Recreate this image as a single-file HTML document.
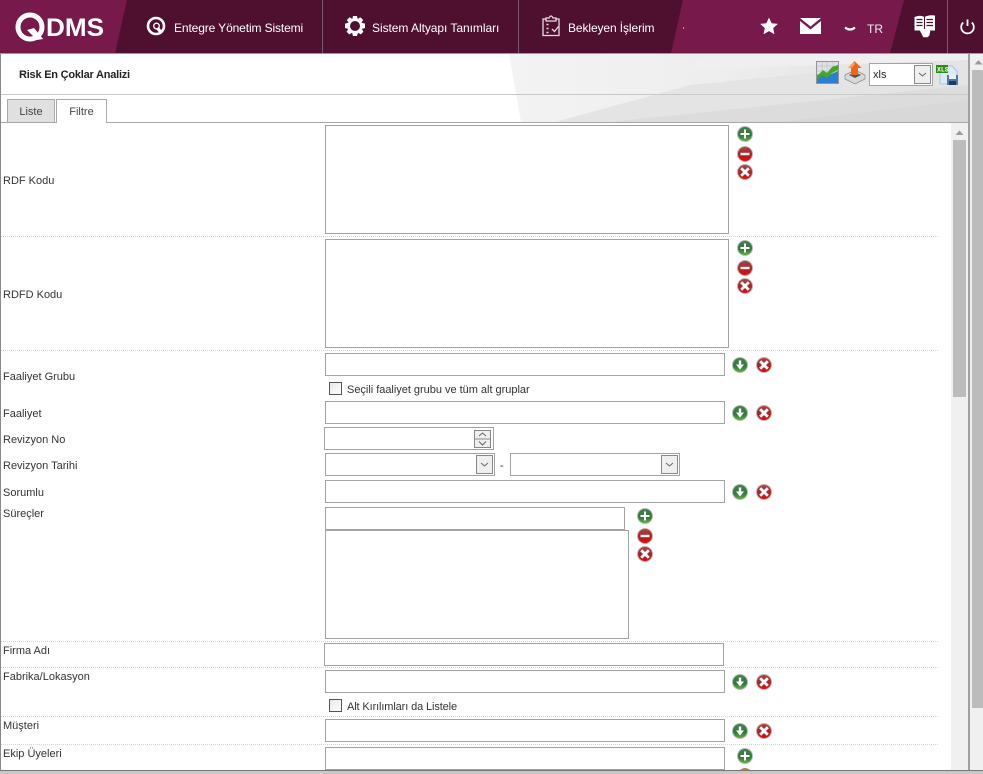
<!DOCTYPE html>
<html lang="tr"><head><meta charset="utf-8"><title>Risk En Çoklar Analizi</title>
<style>
html,body{margin:0;padding:0;width:983px;height:774px;overflow:hidden;background:#fff;font-family:"Liberation Sans",sans-serif}
#p{position:relative;width:983px;height:774px;overflow:hidden}
.a,.l,.n,input,.b,.sep{position:absolute}
.l{left:3px;font-size:11px;line-height:14px;color:#333;white-space:nowrap}
.n{top:18px;color:#fff;font-size:12px;line-height:18px;white-space:nowrap}
input,.b{box-sizing:border-box;border:1px solid #a3a3a3;background:#fff;margin:0;padding:0;border-radius:0;outline:0}
.sep{left:0;width:938px;height:0;border-top:1px dotted #d4d4d4}
.cb{position:absolute;box-sizing:border-box;width:13px;height:13px;border:1px solid #555;background:linear-gradient(135deg,#e8e8e8,#fff)}
svg{position:absolute;left:0;top:0}
</style></head><body><div id="p">

<svg width="983" height="123" viewBox="0 0 983 123" style="z-index:0">
<defs><linearGradient id="bg" x1="0" x2="1"><stop offset="0" stop-color="#f3f3f3"/><stop offset=".45" stop-color="#eeeeee"/><stop offset="1" stop-color="#dedede"/></linearGradient></defs>
<rect y="54" width="970" height="69" fill="#fff"/>
<polygon points="509,54 969,54 969,122 521,122" fill="url(#bg)"/>
<polygon points="555,122 690,85 969,58 969,122" fill="#e4e4e4"/>
<polygon points="610,122 969,85 969,122" fill="#dcdcdc"/>
<polygon points="780,122 969,100 969,122" fill="#d8d8d8"/>
<polygon points="712,54 969,54 969,60 680,70" fill="#efefef"/>
</svg>

<div class="a" style="left:0;top:0;width:983px;height:53px;background:#771a4b"></div>
<svg width="983" height="54" style="z-index:1">
<polygon points="127,0 683,0 671,53 115,53" fill="#4f102f"/>
<polygon points="904,0 983,0 983,53 890,53" fill="#4f102f"/>
<rect x="322" width="1" height="53" fill="#7d5a6e"/>
<rect x="518" width="1" height="53" fill="#7d5a6e"/>
<rect x="947" width="1" height="53" fill="#7d5a6e"/>
<rect y="53" width="983" height="1" fill="#9a9a9a"/>
<!-- logo -->
<circle cx="30" cy="27" r="12" fill="none" stroke="#fff" stroke-width="5"/>
<path d="M27 30 L37 40 L43 39 L34 28 Z" fill="#fff"/>
<text x="46" y="36" font-family="Liberation Sans" font-weight="700" font-size="25" fill="#fff" textLength="58" lengthAdjust="spacingAndGlyphs">DMS</text>
<!-- Q nav -->
<circle cx="156" cy="26" r="8" fill="none" stroke="#fff" stroke-width="2.6"/>
<circle cx="156.500" cy="26" r="2.800" fill="none" stroke="#fff" stroke-width="1.300"/>
<path d="M156 29 L160 33.500 L163 32 L159 27.500 Z" fill="#fff"/>
<!-- gear -->
<g transform="translate(355 26)" fill="#fff">
<path d="M-2-10H2L2.700-7 5.300-8.800 8.200-6 6.400-3.300 10-2.400V2L6.800 2.900 8.400 5.800 5.800 8.400 3 6.800 2 10H-2L-2.900 6.800-5.800 8.400-8.400 5.800-6.800 2.900-10 2V-2.400L-6.400-3.300-8.200-6-5.300-8.800-2.700-7Z"/>
<circle r="5" fill="#4f102f"/></g>
<!-- clipboard -->
<g fill="none" stroke="#e8dce2" stroke-width="1.300">
<path d="M546 19H543V35.500H559V19H556"/>
<path d="M546 21V18H549Q551 14 553 18H556V21Z"/>
<path d="M546.500 24.500h2M546.500 28.500h2M546.500 32.500h2" stroke-width="1.500"/>
<path d="M552 29l2.500 2.500 4-5"/>
</g>
<rect x="683" y="27" width="1" height="2" fill="#d98a5a"/>
<!-- star -->
<path d="M769 17.500l2.600 5.700 6.200.7-4.600 4.200 1.300 6.100-5.500-3.100-5.500 3.100 1.300-6.100-4.600-4.200 6.200-.7Z" fill="#fff"/>
<!-- mail -->
<path d="M800 18H821L810.500 26.500Z" fill="#fff"/>
<path d="M800 21L810.500 29.500 821 21V34H800Z" fill="#fff"/>
<!-- chevron -->
<path d="M845 27.500Q850 31.500 855 27.500" fill="none" stroke="#fff" stroke-width="2.200"/>
<!-- book -->
<g>
<path d="M914.500 17Q920 14.500 924.500 17Q929 14.500 935 15.500V30.500H926L914.500 30.500Z" fill="#fff"/>
<path d="M924.500 17V30" stroke="#4f102f"/>
<path d="M916.500 19.500h6M916.500 22.500h6M916.500 25.500h6M926.500 19.500h6.500M926.500 22.500h6.500M926.500 25.500h6.500" stroke="#4f102f" stroke-width="1.200"/>
<path d="M918 27l1.800-1.200 3 3.500 6-1 1.500 3-1 4.500-2 1.500h-4l-1.800-3.500Z" fill="#fff"/>
</g>
<!-- power -->
<path d="M963.200 22.500A6.300 6.300 0 1 0 971.800 22.500" fill="none" stroke="#fff" stroke-width="1.800"/>
<path d="M967.500 19.500V26" stroke="#fff" stroke-width="1.800"/>
</svg>
<div class="n" style="left:174px;top:19px;z-index:2;letter-spacing:-.12px">Entegre Yönetim Sistemi</div>
<div class="n" style="left:372px;top:19px;z-index:2;letter-spacing:-.05px">Sistem Altyapı Tanımları</div>
<div class="n" style="left:568px;top:19px;z-index:2;letter-spacing:-.1px">Bekleyen İşlerim</div>
<div class="n" style="left:867px;top:20px;z-index:2;color:#eee;font-size:12px">TR</div>

<div class="a" style="left:0;top:54px;width:1px;height:716px;background:#8a8a8a;z-index:3"></div>
<div class="a" style="left:19px;top:68px;font-size:11px;font-weight:700;line-height:14px;letter-spacing:-.22px;color:#222;z-index:2;white-space:nowrap">Risk En Çoklar Analizi</div>
<div class="a" style="left:1px;top:94px;width:968px;height:1px;background:#c8c8c8;z-index:1"></div>
<div class="a" style="left:1px;top:122px;width:968px;height:1px;background:#a8a8a8;z-index:1"></div>

<div class="a" style="box-sizing:border-box;left:7px;top:99px;width:48px;height:23px;background:#e0e0e0;border:1px solid #aaa;border-bottom:0;font-size:11px;line-height:24px;text-align:center;color:#444;z-index:2">Liste</div>
<div class="a" style="box-sizing:border-box;left:56px;top:99px;width:51px;height:24px;background:#fff;border:1px solid #aaa;border-bottom:0;font-size:11px;line-height:24px;text-align:center;color:#444;z-index:2">Filtre</div>

<div class="a" style="left:1px;top:123px;width:951px;height:647px;background:#fff"></div>

<!-- inner scrollbar -->
<div class="a" style="left:951px;top:123px;width:17px;height:647px;background:#f0f0f0"></div>
<div class="a" style="left:953px;top:140px;width:13px;height:257px;background:#bcbcbc"></div>
<!-- outer scrollbar -->
<div class="a" style="left:968px;top:54px;width:2px;height:716px;background:#a0a0a0;z-index:2"></div>
<div class="a" style="left:970px;top:54px;width:13px;height:716px;background:#f0f0f0"></div>
<div class="a" style="left:972px;top:70px;width:11px;height:638px;background:#bcbcbc"></div>

<div class="sep" style="top:236px"></div>
<div class="sep" style="top:350px"></div>
<div class="sep" style="top:641px"></div>
<div class="sep" style="top:667px"></div>
<div class="sep" style="top:716px"></div>
<div class="sep" style="top:744px"></div>

<div class="l" style="top:174px">RDF Kodu</div>
<div class="l" style="top:288px">RDFD Kodu</div>
<div class="l" style="top:370px">Faaliyet Grubu</div>
<div class="l" style="top:407px">Faaliyet</div>
<div class="l" style="top:433px">Revizyon No</div>
<div class="l" style="top:459px">Revizyon Tarihi</div>
<div class="l" style="top:486px">Sorumlu</div>
<div class="l" style="top:507px">Süreçler</div>
<div class="l" style="top:644px">Firma Adı</div>
<div class="l" style="top:670px">Fabrika/Lokasyon</div>
<div class="l" style="top:719px">Müşteri</div>
<div class="l" style="top:747px">Ekip Üyeleri</div>

<div class="b" style="left:325px;top:125px;width:404px;height:109px"></div>
<div class="b" style="left:325px;top:239px;width:404px;height:109px"></div>
<input style="left:325px;top:353px;width:400px;height:23px">
<div class="cb" style="left:329px;top:382px"></div>
<div class="l" style="left:347px;top:383px;letter-spacing:-.02px">Seçili faaliyet grubu ve tüm alt gruplar</div>
<input style="left:325px;top:401px;width:400px;height:23px">

<div class="b" style="left:324px;top:427px;width:170px;height:23px"></div>
<div class="b" style="left:325px;top:453px;width:170px;height:23px"></div>
<div class="l" style="left:500px;top:459px">-</div>
<div class="b" style="left:510px;top:453px;width:170px;height:23px"></div>
<input style="left:325px;top:480px;width:400px;height:23px">
<input style="left:325px;top:507px;width:300px;height:23px">
<div class="b" style="left:325px;top:530px;width:304px;height:109px"></div>
<input style="left:324px;top:643px;width:400px;height:23px">
<input style="left:325px;top:670px;width:400px;height:23px">
<div class="cb" style="left:329px;top:699px"></div>
<div class="l" style="left:347px;top:700px;letter-spacing:-.12px">Alt Kırılımları da Listele</div>
<input style="left:325px;top:719px;width:400px;height:23px">
<input style="left:325px;top:747px;width:400px;height:23px">

<!-- toolbar select -->
<div class="b" style="left:869px;top:63px;width:64px;height:23px;z-index:2;font-size:11px;line-height:22px;padding-left:3px;color:#222">xls</div>

<svg width="983" height="774" style="z-index:2">
<defs>
<linearGradient id="g" x1="0" y1="0" x2="0" y2="1"><stop offset="0" stop-color="#4a7f52"/><stop offset=".6" stop-color="#2f7a3c"/><stop offset="1" stop-color="#66b23e"/></linearGradient>
<linearGradient id="r" x1="0" y1="0" x2="0" y2="1"><stop offset="0" stop-color="#a84848"/><stop offset=".55" stop-color="#b02020"/><stop offset="1" stop-color="#e80808"/></linearGradient>
<g id="ip"><circle r="7.500" fill="url(#g)" stroke="#b4bcb4"/><path d="M-4.500 0H4.500M0-4.500V4.500" stroke="#fff" stroke-width="2"/></g>
<g id="im"><circle r="7.500" fill="url(#r)" stroke="#c4b0b0"/><path d="M-4.500 0H4.500" stroke="#fff" stroke-width="2.400"/></g>
<g id="ix"><circle r="7.500" fill="url(#r)" stroke="#c4b0b0"/><path d="M-3.800-3.800L3.800 3.800M3.800-3.800L-3.800 3.800" stroke="#fff" stroke-width="2.800"/></g>
<g id="id"><circle r="7.500" fill="url(#g)" stroke="#b4bcb4"/><path d="M-1.200-4.500H1.200V-.5H4L0 4.500-4-.5H-1.200Z" fill="#fff"/></g>
<path id="chev" d="M-3.500-1.500L0 1.500 3.500-1.500" fill="none" stroke="#666" stroke-width="1"/>
</defs>
<use href="#ip" x="745" y="134"/><use href="#im" x="745" y="154"/><use href="#ix" x="745" y="172"/>
<use href="#ip" x="745" y="248"/><use href="#im" x="745" y="268"/><use href="#ix" x="745" y="286"/>
<use href="#ip" x="645" y="516"/><use href="#im" x="645" y="536"/><use href="#ix" x="645" y="554"/>
<use href="#id" x="740" y="365"/><use href="#ix" x="764" y="365"/>
<use href="#id" x="740" y="413"/><use href="#ix" x="764" y="413"/>
<use href="#id" x="740" y="492"/><use href="#ix" x="764" y="492"/>
<use href="#id" x="740" y="682"/><use href="#ix" x="764" y="682"/>
<use href="#id" x="740" y="731"/><use href="#ix" x="764" y="731"/>
<use href="#ip" x="745" y="756"/>
<circle cx="745" cy="775" r="7" fill="#c88a20"/>

<!-- spinner -->
<rect x="474.500" y="430.500" width="16" height="17" fill="#efefef" stroke="#888"/>
<path d="M474.500 439H490.500" stroke="#888"/>
<path d="M479 436L482.500 433 486 436M479 441.500L482.500 445 486 441.500" fill="none" stroke="#666"/>
<!-- select buttons -->
<rect x="476.500" y="455.500" width="16" height="18" fill="#efefef" stroke="#888"/><use href="#chev" x="484.500" y="464.500"/>
<rect x="661.500" y="455.500" width="16" height="18" fill="#efefef" stroke="#888"/><use href="#chev" x="669.500" y="464.500"/>
<rect x="914.500" y="65.500" width="16" height="18" fill="#efefef" stroke="#888"/><use href="#chev" x="922.500" y="74.500"/>

<!-- scrollbar arrows -->
<path d="M955.500 135L959.500 130.500 963.500 135Z" fill="#9a9a9a"/>
<path d="M974.500 64.500L978.500 60 982.500 64.500Z" fill="#9a9a9a"/>

<!-- chart icon -->
<rect x="816.500" y="61.500" width="22" height="22" fill="#dfe0e6" stroke="#8f959c"/>
<path d="M817 66h21M817 71h21M817 76h21M822 62v21M827 62v21M833 62v21" stroke="#bfc3cc" stroke-width=".7"/>
<path d="M817 83V75L824 72 829 75 838 71V83Z" fill="#2a7fd0"/>
<path d="M817 76L823 70 827 73 832 67 838 65V70L832 73 827 78 823 75 817 80Z" fill="#46a81e"/>
<!-- printer/upload icon -->
<path d="M845 75L855 70 865 75V79L855 84 845 79Z" fill="#d8d8d8" stroke="#8c8c8c" stroke-width=".7"/>
<path d="M849 75L855 72 861 75 855 78Z" fill="#555"/>
<path d="M854.500 61L848 68H851V75H858V68H861.500Z" fill="#f0641a"/>
<path d="M854.500 61L848 68H851L854.500 65Z" fill="#ffa050"/>
<!-- xls save icon -->
<path d="M940 66H952L957 71V84H940Z" fill="#dbe9f8" stroke="#9db8d4" stroke-width=".8"/>
<rect x="936" y="65" width="12" height="8" fill="#2e8a10"/>
<text x="937" y="71.500" font-family="Liberation Mono" font-weight="700" font-size="6.500" fill="#fff">XLS</text>
<rect x="947" y="75" width="11" height="10" fill="#4a7ba8"/>
<rect x="949" y="75" width="7" height="4" fill="#eee"/>
<rect x="949" y="81" width="7" height="4" fill="#1e3a58"/>
</svg>

<div class="a" style="left:0;top:770px;width:983px;height:1px;background:#777;z-index:5"></div>
<div class="a" style="left:0;top:771px;width:983px;height:3px;background:#c8c8c8;z-index:5"></div>
</div></body></html>
